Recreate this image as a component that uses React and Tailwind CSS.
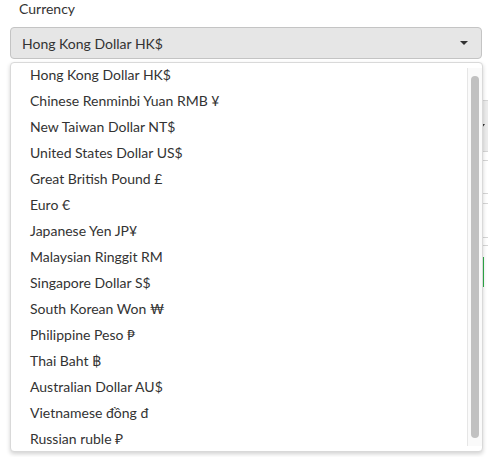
import React from "react";

const items = [
  "Hong Kong Dollar HK$",
  "Chinese Renminbi Yuan RMB ¥",
  "New Taiwan Dollar NT$",
  "United States Dollar US$",
  "Great British Pound £",
  "Euro €",
  "Japanese Yen JP¥",
  "Malaysian Ringgit RM",
  "Singapore Dollar S$",
  "South Korean Won ₩",
  "Philippine Peso ₱",
  "Thai Baht ฿",
  "Australian Dollar AU$",
  "Vietnamese đồng đ",
  "Russian ruble ₽",
];

export default function App() {
  return (
    <div
      className="relative w-[488px] h-[457px] bg-white overflow-hidden text-[14px] text-[#333]"
      style={{ fontFamily: "Lato, 'Open Sans', sans-serif" }}
    >
      <div className="pl-[19px] pt-0 h-[20px] leading-[18px]">Currency</div>
      <div className="ml-[10px] mr-[6px] mt-[7px] h-[32px] rounded-[4px] border border-[#c4c4c4] bg-[#e6e6e6] flex items-center pl-[11px] pr-[13px]">
        <span className="flex-1">Hong Kong Dollar HK$</span>
        <svg width="8" height="4" viewBox="0 0 8 4">
          <path d="M0 0 L8 0 L4 4 Z" fill="#333" />
        </svg>
      </div>

      {/* underlying page content (mostly covered) */}
      <div className="mt-[41px] ml-[20px] mr-0">
        <div className="h-[52px] border-y border-[#d6d6d6] bg-[#ececec] flex items-center justify-end pr-[3px]">
          <svg width="6" height="4" viewBox="0 0 6 4">
            <path d="M0 0 L6 0 L3 4 Z" fill="#333" />
          </svg>
        </div>
        <div className="h-[8px]" />
        <div className="h-[33px] border-t border-[#d6d6d6]" />
        <div className="h-[10px] border-t border-[#d6d6d6]" />
        <div className="h-[34px] border-t border-[#d6d6d6]" />
        <div className="h-[8px] border-t border-[#d6d6d6]" />
        <div className="h-[12px] border-t border-[#d6d6d6]" />
        <div className="h-[30px] flex justify-end">
          <div className="w-[6px] border-l-2 border-[#2fae4a]" />
        </div>
      </div>

      {/* dropdown overlay */}
      <div className="absolute left-[10px] top-[62px] w-[473px] h-[390px] bg-white border border-[#d9d9d9] rounded-[4px] shadow-[0_2px_4px_rgba(0,0,0,0.18)] flex overflow-hidden">
        <ul className="flex-1 -mt-[2px]">
          {items.map((t) => (
            <li key={t} className="h-[26px] flex items-center pl-[19px] whitespace-nowrap">
              {t}
            </li>
          ))}
        </ul>
        <div className="w-[15px] my-[5px] bg-[#fafafa] border-l border-[#e6e6e6] flex justify-center py-[8px]">
          <div className="w-[8px] h-full rounded-full bg-[#c1c1c1]" />
        </div>
      </div>
    </div>
  );
}
